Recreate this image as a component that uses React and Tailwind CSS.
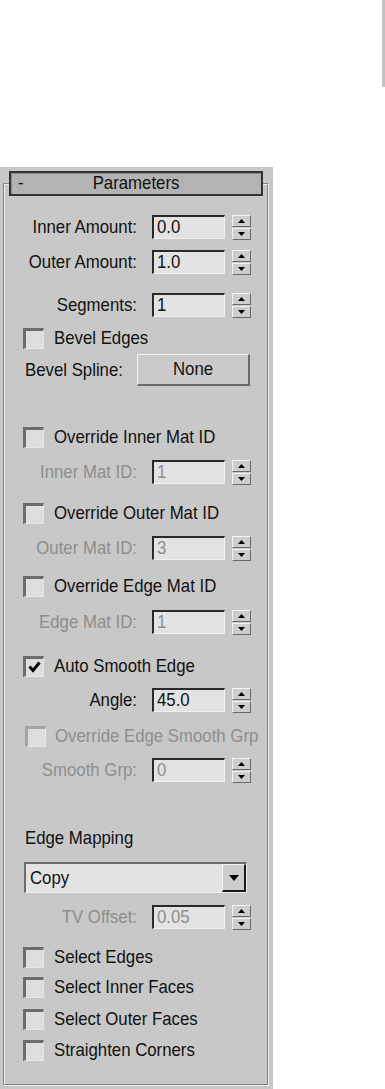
import React from "react";

const FONT = "font-['Liberation_Sans',Arial,sans-serif]";
const T = "text-[16.8px] leading-none scale-y-[1.12]";

function SpinBtn({ up }) {
  return (
    <div className="flex h-[12px] w-[19px] items-center justify-center border border-t-[#f4f4f4] border-l-[#f4f4f4] border-b-[#6a6a6a] border-r-[#6a6a6a] bg-[#cdcdcd]">
      <svg width="7" height="4" viewBox="0 0 7 4">
        <polygon points={up ? "3.5,0 7,4 0,4" : "0,0 7,0 3.5,4"} fill="#000" />
      </svg>
    </div>
  );
}

function Spinner() {
  return (
    <div className="ml-[7px] flex h-[25px] w-[19px] flex-col gap-[1px]">
      <SpinBtn up />
      <SpinBtn />
    </div>
  );
}

function SpinnerRow({ label, value, disabled, mt }) {
  const c = disabled ? "text-[#8e8e8e]" : "text-[#111]";
  return (
    <div className={`flex h-[26px] items-center ${mt}`}>
      <div className={`w-[132px] text-right ${T} ${c}`}>{label}</div>
      <div className="ml-[15px] flex h-[24px] w-[73px] items-center border-t-2 border-l-2 border-b border-r border-t-[#2a2a2a] border-l-[#2a2a2a] border-b-[#f0f0f0] border-r-[#f0f0f0] bg-[#e3e3e3] pl-[3px]">
        <span className={`${T} ${c}`}>{value}</span>
      </div>
      <Spinner />
    </div>
  );
}

function CheckRow({ label, checked, disabled, mt, ml = "ml-[18px]", tl = "ml-[10px]" }) {
  return (
    <div className={`flex h-[26px] items-center ${mt}`}>
      <div
        className={`${ml} flex h-[21px] w-[21px] items-center justify-center border-t-[3px] border-l-[3px] border-b border-r ${
          disabled ? "border-t-[#a4a4a4] border-l-[#a4a4a4]" : "border-t-[#6c6c6c] border-l-[#6c6c6c]"
        } border-b-[#e6e6e6] border-r-[#e6e6e6] bg-[#dedede]`}
      >
        {checked && (
          <svg width="13" height="12" viewBox="0 0 13 12">
            <polyline points="1.5,5.5 5,9.5 11.5,1.5" fill="none" stroke="#000" strokeWidth="3" />
          </svg>
        )}
      </div>
      <span className={`${tl} ${T} ${disabled ? "text-[#8e8e8e]" : "text-[#111]"}`}>{label}</span>
    </div>
  );
}

export default function App() {
  return (
    <div className={`flex h-[1089px] w-[385px] flex-col bg-white ${FONT}`}>
      <div className="flex h-[167px] shrink-0 justify-end">
        <div className="h-[87px] w-[3px] bg-[#c2c2c2]" />
      </div>
      <div className="flex w-[273px] flex-1 flex-col bg-[#c8c8c8] pl-[3px] pt-[16px] pb-[3px]">
        <div className="flex w-[266px] flex-1 flex-col border border-t-[#858585] border-l-[#858585] border-b-[#ececec] border-r-[#ececec]">
          <div className="flex flex-1 flex-col border border-t-[#ececec] border-l-[#ececec] border-b-[#858585] border-r-[#858585]">
            {/* header */}
            <div className="-mt-[14px] ml-[4px] flex h-[25px] w-[254px] items-center border-2 border-[#333333] bg-[#b3b3b3] shadow-[inset_1px_1px_0_#8a8a8a]">
              <span className={`ml-[7px] w-[10px] ${T} text-[#111]`}>-</span>
              <span className={`flex-1 pr-[17px] text-center ${T} text-[#111]`}>Parameters</span>
            </div>

            <SpinnerRow label="Inner Amount:" value="0.0" mt="mt-[18px]" />
            <SpinnerRow label="Outer Amount:" value="1.0" mt="mt-[9px]" />
            <SpinnerRow label="Segments:" value="1" mt="mt-[17px]" />
            <CheckRow label="Bevel Edges" mt="mt-[7px]" />

            <div className="mt-[3px] flex h-[32px] items-center">
              <span className={`ml-[20px] w-[112px] ${T} text-[#111]`}>Bevel Spline:</span>
              <div className="flex h-[32px] w-[113px] items-center justify-center border border-t-[#f2f2f2] border-l-[#f2f2f2] border-b-2 border-r-2 border-b-[#6a6a6a] border-r-[#6a6a6a] bg-[#cacaca]">
                <span className={`${T} text-[#111]`}>None</span>
              </div>
            </div>

            <CheckRow label="Override Inner Mat ID" mt="mt-[38px]" />
            <SpinnerRow label="Inner Mat ID:" value="1" disabled mt="mt-[9px]" />
            <CheckRow label="Override Outer Mat ID" mt="mt-[15px]" />
            <SpinnerRow label="Outer Mat ID:" value="3" disabled mt="mt-[9px]" />
            <CheckRow label="Override Edge Mat ID" mt="mt-[12px]" />
            <SpinnerRow label="Edge Mat ID:" value="1" disabled mt="mt-[10px]" />
            <CheckRow label="Auto Smooth Edge" checked mt="mt-[18px]" />
            <SpinnerRow label="Angle:" value="45.0" mt="mt-[8px]" />
            <CheckRow label="Override Edge Smooth Grp" disabled mt="mt-[10px]" ml="ml-[20px]" tl="ml-[9px]" />
            <SpinnerRow label="Smooth Grp:" value="0" disabled mt="mt-[8px]" />

            <div className="mt-[42px] flex h-[26px] items-center">
              <span className={`ml-[20px] ${T} text-[#111]`}>Edge Mapping</span>
            </div>

            <div className="ml-[19px] mt-[11px] flex h-[31px] w-[223px] items-center border-t-2 border-l-2 border-b border-r border-t-[#6c6c6c] border-l-[#6c6c6c] border-b-[#eeeeee] border-r-[#eeeeee] bg-[#e3e3e3]">
              <span className={`ml-[4px] flex-1 ${T} text-[#111]`}>Copy</span>
              <div className="flex h-full w-[24px] items-center justify-center border border-t-[#f4f4f4] border-l-[#f4f4f4] border-b-2 border-r-2 border-b-[#1a1a1a] border-r-[#1a1a1a] bg-[#cdcdcd]">
                <svg width="10" height="6" viewBox="0 0 10 6">
                  <polygon points="0,0 10,0 5,6" fill="#000" />
                </svg>
              </div>
            </div>

            <SpinnerRow label="TV Offset:" value="0.05" disabled mt="mt-[11px]" />
            <CheckRow label="Select Edges" mt="mt-[14px]" />
            <CheckRow label="Select Inner Faces" mt="mt-[4px]" />
            <CheckRow label="Select Outer Faces" mt="mt-[6px]" />
            <CheckRow label="Straighten Corners" mt="mt-[5px]" />
          </div>
        </div>
      </div>
    </div>
  );
}
